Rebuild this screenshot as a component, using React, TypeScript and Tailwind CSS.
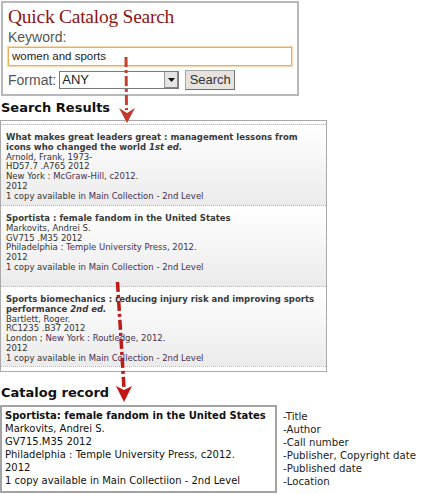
import React from "react";

type Item = {
  title: string;
  edition?: string;
  author: string;
  callNo: string;
  pubPlace: string;
  pubLink: string;
  year: string;
};

const results: Item[] = [
  {
    title: "What makes great leaders great : management lessons from icons who changed the world",
    edition: "1st ed.",
    author: "Arnold, Frank, 1973-",
    callNo: "HD57.7 .A765 2012",
    pubPlace: "New York : ",
    pubLink: "McGraw-Hill, c2012.",
    year: "2012",
  },
  {
    title: "Sportista : female fandom in the United States",
    author: "Markovits, Andrei S.",
    callNo: "GV715 .M35 2012",
    pubPlace: "Philadelphia : ",
    pubLink: "Temple University Press, 2012.",
    year: "2012",
  },
  {
    title: "Sports biomechanics : reducing injury risk and improving sports performance",
    edition: "2nd ed.",
    author: "Bartlett, Roger.",
    callNo: "RC1235 .B37 2012",
    pubPlace: "London ; ",
    pubLink: "New York : Routledge, 2012.",
    year: "2012",
  },
];

const labels = ["-Title", "-Author", "-Call number", "-Publisher, Copyright date", "-Published date", "-Location"];

const ResultItem = ({ item, last }: { item: Item; last: boolean }) => (
  <div
    className={
      "h-[81px] border-t border-dotted border-[#b8b8b8] bg-gradient-to-b from-white to-[#ebebeb] px-[5px] pt-[8px] text-[8.5px] leading-[9.8px] text-[#333] " +
      (last ? "border-b" : "")
    }
  >
    <div className="font-bold text-[#3a3a3a]">
      {item.title}
      {item.edition && <i> {item.edition}</i>}
    </div>
    <div>{item.author}</div>
    <div>{item.callNo}</div>
    <div>
      {item.pubPlace}
      <span className="text-[#45304f]">{item.pubLink}</span>
    </div>
    <div>{item.year}</div>
    <div>
      1 copy available <span className="text-[#45304f]">in Main Collection - 2nd Level</span>
    </div>
  </div>
);

export default function App() {
  return (
    <div
      className="relative w-[423px] h-[494px] bg-white overflow-hidden"
      style={{ fontFamily: '"DejaVu Sans", Verdana, sans-serif' }}
    >
      {/* quick search box */}
      <div className="mt-px ml-px w-[298px] h-[95px] border-2 border-[#b8b8b8] px-[5px] pt-[1px] font-['Liberation_Sans',Arial,sans-serif]">
        <div className="font-['Liberation_Serif',serif] text-[19.5px] leading-[25px] tracking-[-0.25px] text-[#8b1616]">
          Quick Catalog Search
        </div>
        <div className="text-[14px] leading-[17px] text-[#555]">Keyword:</div>
        <div className="mt-[1px] h-[19px] w-[284px] border border-[#e3b15e] shadow-[0_0_1px_1px_#f5dcae] bg-white pl-[3px] text-[11.5px] leading-[17px] text-[#222]">
          women and sports
        </div>
        <div className="mt-[4px] flex items-center">
          <span className="text-[14px] leading-[18px] text-[#555]">Format:</span>
          <div className="ml-[3px] flex h-[18px] w-[120px] border border-[#7a7a7a] bg-white">
            <span className="flex-1 pl-[2px] text-[13px] leading-[16px] text-[#222]">ANY</span>
            <div className="flex w-[14px] items-center justify-center border-l border-[#999] bg-[#e4e4e4] shadow-[inset_-1px_-1px_0_#888]">
              <svg width="7" height="4" viewBox="0 0 7 4">
                <path d="M0 0h7L3.5 4z" fill="#111" />
              </svg>
            </div>
          </div>
          <div className="ml-[6px] flex h-[20px] w-[50px] items-center justify-center border border-[#a8a8a8] border-r-[#707070] border-b-[#707070] bg-[#e6e3de] text-[13px] text-[#333]">
            Search
          </div>
        </div>
      </div>

      {/* search results */}
      <div className="mt-[3px] pl-px text-[13px] font-bold leading-[18px] text-[#111]">Search Results</div>
      <div className="mt-[3px] w-[327px] border border-[#aaa] pt-[3px] pb-[4px]">
        {results.map((item, i) => (
          <ResultItem key={item.callNo} item={item} last={i === results.length - 1} />
        ))}
      </div>

      {/* catalog record */}
      <div className="mt-[12px] pl-px text-[13px] font-bold leading-[18px] text-[#111]">Catalog record</div>
      <div className="mt-[3px] flex">
        <div className="h-[88px] w-[277px] border-2 border-[#a3a3a3] px-[3px] pt-[2px] text-[10px] leading-[13px] text-[#111]">
          <div className="font-bold">Sportista: female fandom in the United States</div>
          <div>Markovits, Andrei S.</div>
          <div>GV715.M35 2012</div>
          <div>Philadelphia : Temple University Press, c2012.</div>
          <div>2012</div>
          <div>1 copy available in Main Collectiion - 2nd Level</div>
        </div>
        <div className="ml-[6px] pt-[5px] text-[10.2px] leading-[13px] text-[#222]">
          {labels.map((l) => (
            <div key={l}>{l}</div>
          ))}
        </div>
      </div>

      {/* arrows drawn over the page */}
      <svg className="pointer-events-none absolute left-0 top-0" width="423" height="494" viewBox="0 0 423 494">
        <line x1="126" y1="57" x2="126.5" y2="110" stroke="#c4412e" strokeWidth="3" strokeDasharray="10 3 3 3" />
        <polygon points="119,108 127,113 135,108 127,123" fill="#c0392b" />
        <line x1="117.5" y1="282" x2="124" y2="388" stroke="#bd1a1a" strokeWidth="3.5" strokeDasharray="10 3 3 3" />
        <polygon points="116,386 124,390 132,386 124,402" fill="#c41414" />
      </svg>
    </div>
  );
}
